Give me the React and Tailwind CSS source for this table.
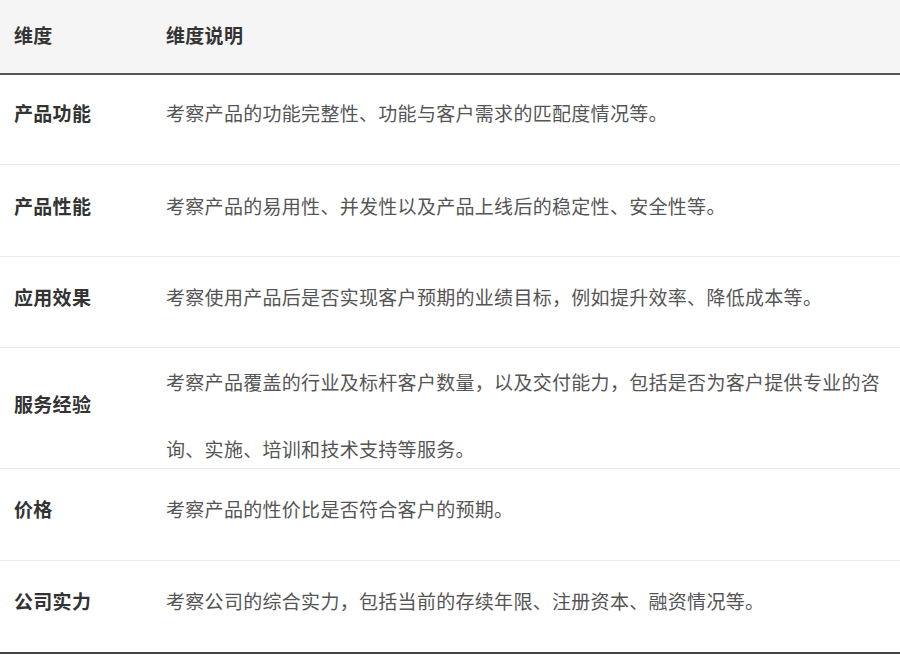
import React from 'react'

const rows = [
    { name: '产品功能', desc: ['考察产品的功能完整性、功能与客户需求的匹配度情况等。'], h: 'h-[90px]', pt: 'pt-[26px]' },
    { name: '产品性能', desc: ['考察产品的易用性、并发性以及产品上线后的稳定性、安全性等。'], h: 'h-[92px]', pt: 'pt-[29px]' },
    { name: '应用效果', desc: ['考察使用产品后是否实现客户预期的业绩目标，例如提升效率、降低成本等。'], h: 'h-[91px]', pt: 'pt-[28px]' },
    { name: '价格', desc: ['考察产品的性价比是否符合客户的预期。'], h: 'h-[92px]', pt: 'pt-[28px]' },
    { name: '公司实力', desc: ['考察公司的综合实力，包括当前的存续年限、注册资本、融资情况等。'], h: 'h-[91px]', pt: 'pt-[28px]' },
]

function Row({ name, desc, h, pt }) {
    return (
        <div className={`flex ${h} border-b border-[#ebebeb]`}>
            <div className={`w-[166px] shrink-0 pl-[14px] ${pt} leading-6 font-bold text-[#333]`}>{name}</div>
            <div className={`flex-1 ${pt} leading-6 text-[#555]`}>{desc}</div>
        </div>
    )
}

export default function App() {
    return (
        <div className="w-[900px] h-[660px] bg-white text-[19px] tracking-[0.3px] font-['Noto_Sans_CJK_SC',sans-serif]">
            <div className="flex h-[75px] bg-[#f5f5f5] border-b-2 border-[#555] font-bold text-[#333]">
                <div className="w-[166px] shrink-0 pl-[14px] pt-[23px] leading-6">维度</div>
                <div className="flex-1 pt-[23px] leading-6">维度说明</div>
            </div>
            <Row {...rows[0]} />
            <Row {...rows[1]} />
            <Row {...rows[2]} />
            <div className="flex h-[121px] border-b border-[#ebebeb]">
                <div className="w-[166px] shrink-0 pl-[14px] pt-[44px] leading-6 font-bold text-[#333]">服务经验</div>
                <div className="flex-1 pt-0 leading-[67px] text-[#555]">
                    <div>考察产品覆盖的行业及标杆客户数量，以及交付能力，包括是否为客户提供专业的咨</div>
                    <div>询、实施、培训和技术支持等服务。</div>
                </div>
            </div>
            <Row {...rows[3]} />
            <div className="flex h-[93px] border-b-2 border-[#444]">
                <div className="w-[166px] shrink-0 pl-[14px] pt-[28px] leading-6 font-bold text-[#333]">{rows[4].name}</div>
                <div className="flex-1 pt-[28px] leading-6 text-[#555]">{rows[4].desc}</div>
            </div>
        </div>
    )
}
